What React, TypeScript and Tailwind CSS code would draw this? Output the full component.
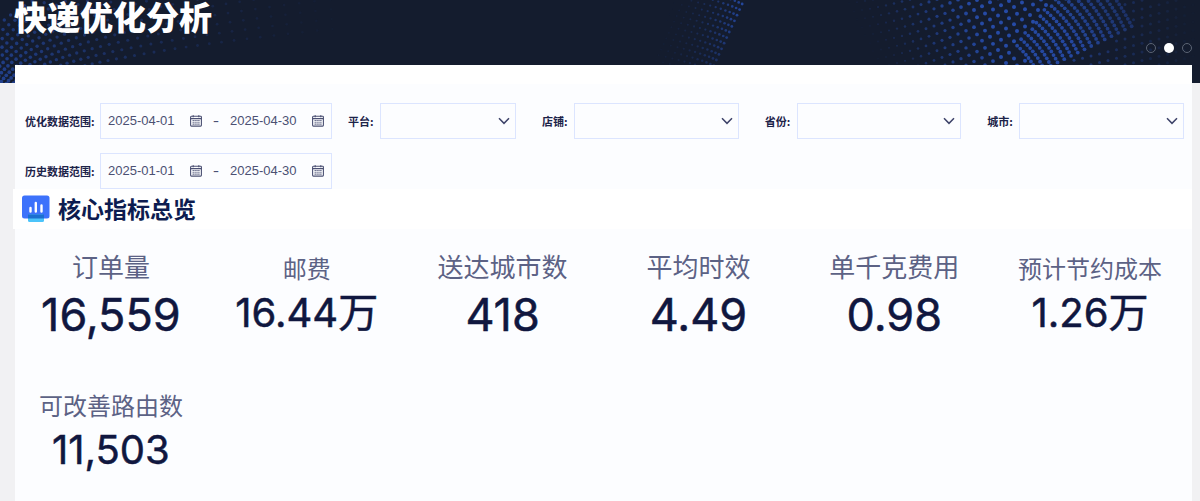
import React from "react";

type Dot = { x: number; y: number; r: number; o: number };

function leftSwirl(): Dot[] {
  const dots: Dot[] = [];
  for (let k = 0; k < 12; k++) {
    const x0 = 16 - k * 5;
    const start = [x0, 98];
    const ctrl = [x0 + 2, 60 - k * 9];
    const end = [380, 24 - k * 10];
    const count = 44;
    for (let i = 0; i <= count; i++) {
      const t = i / count;
      const a = (1 - t) * (1 - t);
      const b = 2 * t * (1 - t);
      const c = t * t;
      dots.push({
        x: a * start[0] + b * ctrl[0] + c * end[0],
        y: a * start[1] + b * ctrl[1] + c * end[1],
        r: 2 - t * 0.8,
        o: Math.max(0, 0.8 - t * 0.82),
      });
    }
  }
  return dots;
}

function middleFan(): Dot[] {
  const dots: Dot[] = [];
  for (let col = 0; col < 13; col++) {
    for (let row = -6; row < 16; row++) {
      const gap = col * 4 + col * col * 0.2;
      const y = row * 5.6 - col * 1.6 + 4;
      dots.push({
        x: 744 - Math.max(y, -20) * 0.46 - gap,
        y,
        r: 1.4 - col * 0.05,
        o: Math.max(0, (0.85 - col * 0.075) * (1 - Math.max(y, 0) / 110)),
      });
    }
  }
  return dots;
}

const CX = 960;
const CY = 110;

function polar(x: number, y: number) {
  return {
    angle: (Math.atan2(CY - y, x - CX) * 180) / Math.PI,
    radius: Math.hypot(x - CX, y - CY),
  };
}

function rightSwirl(): Dot[] {
  const dots: Dot[] = [];
  // Rising rows that brighten towards the crest
  for (let row = 0; row < 24; row++) {
    for (let col = 0; col < 34; col++) {
      const x = 838 + col * 8 + (row % 2) * 3;
      const u = x - 838;
      const y = row * 8.6 - 4 - u * 0.1 - u * u * 0.0013;
      const { angle, radius } = polar(x, y);
      if (angle < 50 && radius > 82) continue;
      const t = Math.min(1, Math.max(0, (x - 842 - y * 0.5) / 130));
      dots.push({ x, y, r: 0.8 + t * 1.2, o: t * 0.9 });
    }
  }
  // Tightly dotted arcs on the crest
  for (let radius = 86; radius < 192; radius += 7.5) {
    const step = (4.2 / radius) * (180 / Math.PI);
    for (let angle = 26; angle < 50; angle += step) {
      const rad = (angle * Math.PI) / 180;
      dots.push({
        x: CX + radius * Math.cos(rad),
        y: CY - radius * Math.sin(rad),
        r: 1.9,
        o: 0.85 - Math.max(0, radius - 130) / 150,
      });
    }
  }
  // Fading rows past the crest
  for (let row = 0; row < 15; row++) {
    for (let col = 0; col < 20; col++) {
      const x = 1040 + col * 8.5;
      const y = row * 8.6 - (x - 1040) * 0.25;
      const { angle, radius } = polar(x, y);
      if (angle > 24 && radius < 192) continue;
      if (x < 1056) continue;
      dots.push({ x, y, r: 1.5, o: Math.max(0, 0.6 - (x - 1060) / 230) });
    }
  }
  return dots;
}

const DOTS = [...leftSwirl(), ...middleFan(), ...rightSwirl()].filter(
  (d) => d.o > 0.02 && d.y > -3 && d.y < 84 && d.x > -3 && d.x < 1203,
);

function Backdrop() {
  return (
    <svg
      className="absolute inset-0 h-full w-full"
      viewBox="0 0 1200 83"
      preserveAspectRatio="xMidYMin slice"
      aria-hidden="true"
    >
      {DOTS.map((d, i) => (
        <circle key={i} cx={d.x} cy={d.y} r={d.r} fill="#2850b4" opacity={d.o} />
      ))}
    </svg>
  );
}

function CalendarIcon() {
  return (
    <svg width="12" height="12" viewBox="0 0 12 12" fill="none" stroke="#4b5073" aria-hidden="true">
      <rect x="0.6" y="1.3" width="10.8" height="9.8" rx="0.8" strokeWidth="1.1" />
      <path d="M0.6 3.6h10.8M3.2 0.2v2M8.8 0.2v2" strokeWidth="1.2" />
      <path d="M2.6 5.5h7M2.6 7.3h7M2.6 9.1h7" strokeWidth="1.1" strokeDasharray="1.2 0.7" />
    </svg>
  );
}

function DateInput({ id, value, label }: { id: string; value: string; label: string }) {
  return (
    <>
      <input
        id={id}
        aria-label={label}
        defaultValue={value}
        className="w-[82px] bg-transparent font-['Liberation_Sans',sans-serif] text-[13px] text-[#4b5073] outline-none"
      />
      <button type="button" aria-label={`${label} 日历`} className="shrink-0">
        <CalendarIcon />
      </button>
    </>
  );
}

function DateRange({ id, label, from, to }: { id: string; label: string; from: string; to: string }) {
  return (
    <div className="flex shrink-0 items-center">
      <label htmlFor={id} className="w-[75px] whitespace-nowrap text-[11px] font-bold text-[#1c2349]">
        {label}:
      </label>
      <div className="flex h-9 w-[232px] items-center border border-[#dce5ff] px-[7px]">
        <DateInput id={id} value={from} label={`${label} 开始`} />
        <span className="w-[28px] shrink-0 text-center font-['Inter',sans-serif] text-sm text-[#4b5073]">-</span>
        <DateInput id={`${id}-end`} value={to} label={`${label} 结束`} />
      </div>
    </div>
  );
}

function SelectField({ id, label, grow }: { id: string; label: string; grow: string }) {
  return (
    <div className={`flex min-w-0 items-center ${grow}`}>
      <label htmlFor={id} className="w-8 shrink-0 whitespace-nowrap text-[11px] font-bold text-[#1c2349]">
        {label}:
      </label>
      <div className="relative min-w-0 flex-1">
        <select id={id} className="block h-9 w-full appearance-none border border-[#dce5ff] bg-transparent px-2 text-xs outline-none">
          <option value=""></option>
        </select>
        <svg
          className="pointer-events-none absolute right-1.5 top-1/2 -translate-y-1/2"
          width="12"
          height="8"
          viewBox="0 0 12 8"
          fill="none"
          stroke="#3d4369"
          strokeWidth="1.5"
          aria-hidden="true"
        >
          <path d="M1 1.3 6 6.4 11 1.3" />
        </svg>
      </div>
    </div>
  );
}

function Metric({ label, value, compact }: { label: string; value: string; compact?: boolean }) {
  return (
    <div className="flex h-[124px] flex-col items-center justify-center gap-[3px] whitespace-nowrap pb-[3px]">
      <dt className={compact ? "text-2xl/[44px] text-[#5c6285]" : "text-[26px]/[48px] text-[#5c6285]"}>{label}</dt>
      <dd
        className={
          compact
            ? "font-['Inter','Noto_Sans_CJK_SC',sans-serif] text-[40px]/[40px] text-[#10173f]"
            : "font-['Inter','Noto_Sans_CJK_SC',sans-serif] text-[45px]/[44px] text-[#10173f]"
        }
      >
        <span className="[-webkit-text-stroke:0.5px_#10173f]">{value}</span>
      </dd>
    </div>
  );
}

export default function App() {
  return (
    <div className="flex min-h-screen flex-col bg-[#f1f1f3] font-['Noto_Sans_CJK_SC',sans-serif]">
      <header className="relative h-[83px] bg-[#141c2e]">
        <Backdrop />
        <div className="relative flex justify-between pl-[14px] pr-2">
          <h1 className="text-[33px]/[32px] font-black text-white">快递优化分析</h1>
          <nav aria-label="分页" className="mt-[43px] flex gap-2">
            <button type="button" aria-label="1" className="size-[10px] rounded-full border border-[#5b6474]" />
            <button type="button" aria-label="2" className="size-[10px] rounded-full bg-white" />
            <button type="button" aria-label="3" className="size-[10px] rounded-full border border-[#5b6474]" />
          </nav>
        </div>
      </header>

      <main className="relative -mt-[18px] ml-[15px] mr-2 flex-1 border-t-[19px] border-white bg-[#fcfdff]">
        <form className="flex flex-col gap-[14px] pl-[10px] pr-2 pt-[19px]">
          <div className="flex items-center gap-[26px]">
            <div className="flex shrink-0 gap-4">
              <DateRange id="opt" label="优化数据范围" from="2025-04-01" to="2025-04-30" />
              <SelectField id="platform" label="平台" grow="w-[168px]" />
            </div>
            <SelectField id="shop" label="店铺" grow="flex-1" />
            <SelectField id="province" label="省份" grow="flex-1" />
            <SelectField id="city" label="城市" grow="flex-1" />
          </div>
          <DateRange id="hist" label="历史数据范围" from="2025-01-01" to="2025-04-30" />
        </form>

        <div className="-ml-0.5 flex h-10 items-center gap-2 bg-white pb-0.5 pl-2">
          <svg width="29" height="28" viewBox="0 0 29 28" aria-hidden="true">
            <rect x="1" y="1.5" width="27.5" height="23" rx="2.5" fill="#3d72fb" />
            <rect x="7" y="20.5" width="16" height="7.5" rx="1.5" fill="#4cc4fa" />
            <path d="M7 20.5h16v4H7z" fill="#1b6fd0" />
            <path d="M9.5 14v3.5M14.8 9v8.5M20.5 11.5v6" stroke="#fff" strokeWidth="2.4" strokeLinecap="round" />
          </svg>
          <h2 className="text-[23px]/[32px] font-bold text-[#0d1c50]">核心指标总览</h2>
        </div>

        <dl className="-ml-0.5 mr-1 grid grid-cols-6 gap-y-[13px]">
          <Metric label="订单量" value="16,559" />
          <Metric label="邮费" value="16.44万" compact />
          <Metric label="送达城市数" value="418" />
          <Metric label="平均时效" value="4.49" />
          <Metric label="单千克费用" value="0.98" />
          <Metric label="预计节约成本" value="1.26万" compact />
          <Metric label="可改善路由数" value="11,503" compact />
        </dl>
      </main>
    </div>
  );
}
